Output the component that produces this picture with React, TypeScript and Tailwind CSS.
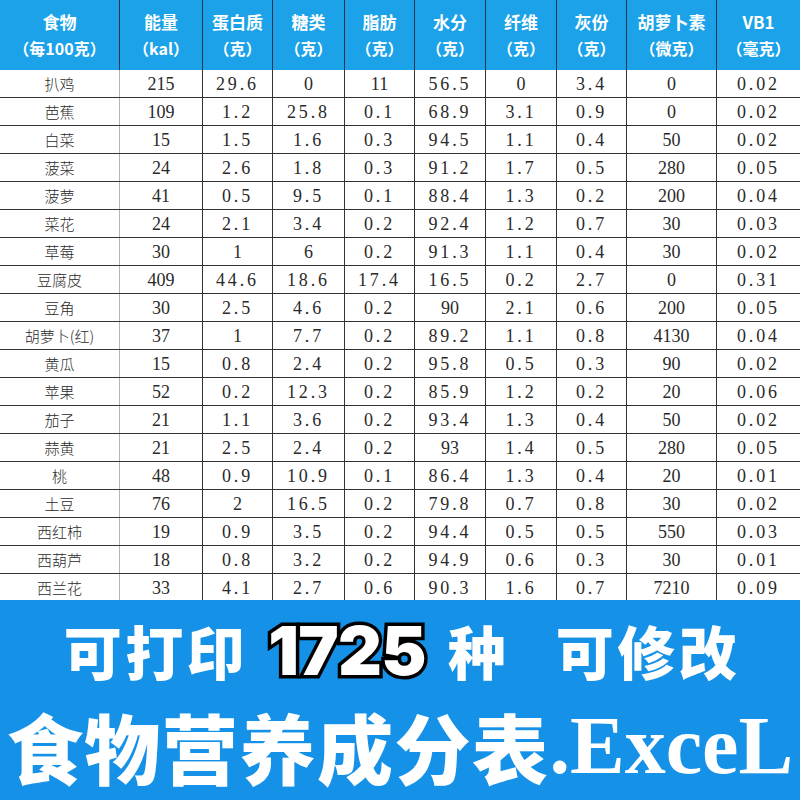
import React from "react";

const COLS = "grid grid-cols-[120px_83px_70px_72px_70px_71px_71px_70px_90px_83px]";

const headers: [string, string][] = [
  ["食物", "（每100克）"],
  ["能量", "（kal）"],
  ["蛋白质", "（克）"],
  ["糖类", "（克）"],
  ["脂肪", "（克）"],
  ["水分", "（克）"],
  ["纤维", "（克）"],
  ["灰份", "（克）"],
  ["胡萝卜素", "（微克）"],
  ["VB1", "（毫克）"],
];

const rows: string[][] = [
  ["扒鸡", "215", "29.6", "0", "11", "56.5", "0", "3.4", "0", "0.02"],
  ["芭蕉", "109", "1.2", "25.8", "0.1", "68.9", "3.1", "0.9", "0", "0.02"],
  ["白菜", "15", "1.5", "1.6", "0.3", "94.5", "1.1", "0.4", "50", "0.02"],
  ["菠菜", "24", "2.6", "1.8", "0.3", "91.2", "1.7", "0.5", "280", "0.05"],
  ["菠萝", "41", "0.5", "9.5", "0.1", "88.4", "1.3", "0.2", "200", "0.04"],
  ["菜花", "24", "2.1", "3.4", "0.2", "92.4", "1.2", "0.7", "30", "0.03"],
  ["草莓", "30", "1", "6", "0.2", "91.3", "1.1", "0.4", "30", "0.02"],
  ["豆腐皮", "409", "44.6", "18.6", "17.4", "16.5", "0.2", "2.7", "0", "0.31"],
  ["豆角", "30", "2.5", "4.6", "0.2", "90", "2.1", "0.6", "200", "0.05"],
  ["胡萝卜(红)", "37", "1", "7.7", "0.2", "89.2", "1.1", "0.8", "4130", "0.04"],
  ["黄瓜", "15", "0.8", "2.4", "0.2", "95.8", "0.5", "0.3", "90", "0.02"],
  ["苹果", "52", "0.2", "12.3", "0.2", "85.9", "1.2", "0.2", "20", "0.06"],
  ["茄子", "21", "1.1", "3.6", "0.2", "93.4", "1.3", "0.4", "50", "0.02"],
  ["蒜黄", "21", "2.5", "2.4", "0.2", "93", "1.4", "0.5", "280", "0.05"],
  ["桃", "48", "0.9", "10.9", "0.1", "86.4", "1.3", "0.4", "20", "0.01"],
  ["土豆", "76", "2", "16.5", "0.2", "79.8", "0.7", "0.8", "30", "0.02"],
  ["西红柿", "19", "0.9", "3.5", "0.2", "94.4", "0.5", "0.5", "550", "0.03"],
  ["西葫芦", "18", "0.8", "3.2", "0.2", "94.9", "0.6", "0.3", "30", "0.01"],
  ["西兰花", "33", "4.1", "2.7", "0.6", "90.3", "1.6", "0.7", "7210", "0.09"],
];

export default function App() {
  return (
    <div className="w-[800px] h-[800px] flex flex-col bg-white overflow-hidden">
      {/* header */}
      <div className={`${COLS} h-[70px] bg-[#1ba2e8] shrink-0 font-['Noto_Sans_CJK_SC',sans-serif] font-bold text-white text-[16px] leading-[27px]`}>
        {headers.map(([a, b], i) => (
          <div
            key={i}
            className={
              i === 9
                ? "flex flex-col items-center justify-center"
                : "flex flex-col items-center justify-center border-r border-[#1d3550]"
            }
          >
            <span className="text-[17px]">{a}</span>
            <span className="whitespace-nowrap">{b}</span>
          </div>
        ))}
      </div>

      {/* body */}
      <div className="h-[530px] overflow-hidden shrink-0 font-['Liberation_Serif','Noto_Sans_CJK_SC',serif] text-[18px] text-[#2a2a2a]">
        {rows.map((r, ri) => (
          <div key={ri} className={`${COLS} h-[28px] border-b border-[#333]`}>
            {r.map((v, ci) => (
              <div
                key={ci}
                className={
                  (ci === 0
                    ? "border-r border-[#b5b5b5] font-['Noto_Sans_CJK_SC',sans-serif] text-[15px] font-light "
                    : ci === 9
                    ? ""
                    : "border-r border-[#333] ") +
                  (v.includes(".") && ci !== 0 ? "tracking-[0.16em] " : "") +
                  "flex items-center justify-center leading-none"
                }
              >
                {v}
              </div>
            ))}
          </div>
        ))}
      </div>

      {/* banner */}
      <div className="flex-1 bg-[#1592e8] flex flex-col items-center text-white">
        <div className="h-[100px] flex items-center pl-[4px] font-['Noto_Sans_CJK_SC',sans-serif] font-black text-[58px] leading-none">
          <span className="tracking-[0.06em]">可打印</span>
          <span className="ml-[20px] font-['Inter',sans-serif] font-black text-[68px] tracking-[-0.01em] [-webkit-text-stroke:7px_#000] [paint-order:stroke_fill]">
            1725
          </span>
          <span className="ml-[22px]">种</span>
          <span className="ml-[50px] tracking-[0.06em]">可修改</span>
        </div>
        <div className="flex items-center h-[92px] leading-none">
          <span className="font-['Noto_Sans_CJK_SC',sans-serif] font-black text-[76px] tracking-[0.02em]">
            食物营养成分表
          </span>
          <span className="font-['Liberation_Serif',serif] font-bold text-[82px]">.ExceL</span>
        </div>
      </div>
    </div>
  );
}
